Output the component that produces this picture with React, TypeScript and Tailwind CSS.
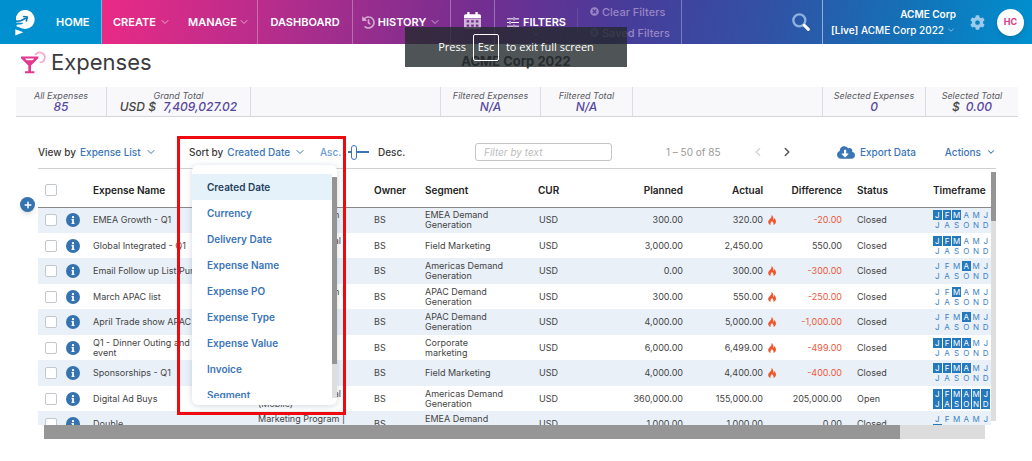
import React from "react";
import { ChevronDown, ChevronLeft, ChevronRight } from "lucide-react";
import { FaCloudDownloadAlt, FaHistory, FaCog, FaInfo, FaPlus, FaTimesCircle } from "react-icons/fa";

type Row = {
  name: string;
  type?: string;
  segment: string;
  planned: string;
  actual: string;
  hot?: boolean;
  diff: string;
  status: string;
  months: number[];
};

const ALL = [0, 1, 2, 3, 4, 5, 6, 7, 8, 9, 10, 11];
const MONTHS = "JFMAMJJASOND".split("");

const rows: Row[] = [
  { name: "EMEA Growth - Q1", type: "Marketing Program | Event", segment: "EMEA Demand Generation", planned: "300.00", actual: "320.00", hot: true, diff: "-20.00", status: "Closed", months: [0, 1, 2] },
  { name: "Global Integrated - Q1", type: "Advertising | Digital (Mobile)", segment: "Field Marketing", planned: "3,000.00", actual: "2,450.00", diff: "550.00", status: "Closed", months: [0, 1, 2] },
  { name: "Email Follow up List Purchase", segment: "Americas Demand Generation", planned: "0.00", actual: "300.00", hot: true, diff: "-300.00", status: "Closed", months: [3] },
  { name: "March APAC list", type: "Marketing Program | Event", segment: "APAC Demand Generation", planned: "300.00", actual: "550.00", hot: true, diff: "-250.00", status: "Closed", months: [2] },
  { name: "April Trade show APAC", segment: "APAC Demand Generation", planned: "4,000.00", actual: "5,000.00", hot: true, diff: "-1,000.00", status: "Closed", months: [3] },
  { name: "Q1 - Dinner Outing and event", segment: "Corporate marketing", planned: "6,000.00", actual: "6,499.00", hot: true, diff: "-499.00", status: "Closed", months: [0, 1, 2, 3] },
  { name: "Sponsorships - Q1", segment: "Field Marketing", planned: "4,000.00", actual: "4,400.00", hot: true, diff: "-400.00", status: "Closed", months: [0, 1, 2, 3] },
  { name: "Digital Ad Buys", type: "Advertising | Digital (Mobile)", segment: "Americas Demand Generation", planned: "360,000.00", actual: "155,000.00", diff: "205,000.00", status: "Open", months: ALL },
  { name: "Double", type: "Marketing Program | Event", segment: "EMEA Demand Generation", planned: "1,000.00", actual: "1,000.00", diff: "0.00", status: "Closed", months: [6] },
];

const sortOptions = ["Created Date", "Currency", "Delivery Date", "Expense Name", "Expense PO", "Expense Type", "Expense Value", "Invoice", "Segment"];

function Logo() {
  return (
    <svg viewBox="0 0 60 80" className="h-[27px] w-5" aria-hidden="true">
      <path d="M3 23 A28.5 28.5 0 1 1 22 58 L4 51 C4 47 8 45 14 46 C20 47 24 44 24 41 L3 40Z" fill="#fff" />
      <path d="M3 36 C12 37 22 34 33 26 M26 22 L37 24 L34 35" fill="none" stroke="#0a78b4" strokeWidth="5" strokeLinecap="round" strokeLinejoin="round" />
      <path d="M1 60 L25 69 L1 79Z" fill="#fff" />
    </svg>
  );
}

function Cocktail() {
  return (
    <svg viewBox="0 0 75 68" className="h-[23px] w-[25px]" aria-hidden="true">
      <path d="M43 12 A15 15 0 1 1 56 34" fill="none" stroke="#f7a8cd" strokeWidth="5" />
      <path d="M0 16 H52 V21 L30 43 V60 H40 V66 H12 V60 H22 V43 L0 21Z M12 22 L17 27 H35 L40 22Z" fill="#e2388f" fillRule="evenodd" />
    </svg>
  );
}

function CalendarIcon() {
  return (
    <svg viewBox="0 0 52 52" className="size-[17px]" aria-hidden="true">
      <path d="M10 0h7v7h18V0h7v7h5a5 5 0 0 1 5 5v7H0v-7a5 5 0 0 1 5-5h5Z" fill="#fff" />
      <path d="M0 21H52V46a5 5 0 0 1-5 5H5a5 5 0 0 1-5-5ZM8 25v7h8v-7ZM22 25v7h8v-7ZM36 25v7h8v-7ZM8 38v7h8v-7ZM22 38v7h8v-7ZM36 38v7h8v-7Z" fill="#fff" fillOpacity="0.65" fillRule="evenodd" />
    </svg>
  );
}

function FilterIcon() {
  return (
    <svg viewBox="0 0 36 32" className="h-[11px] w-3" stroke="#fff" strokeWidth="3" fill="none" aria-hidden="true">
      <path d="M0 5H18M24 5H36M0 16H6M12 16H36M0 27H18M24 27H36M21 0V10M9 11V21M21 22V32" />
    </svg>
  );
}

function SearchIcon() {
  return (
    <svg viewBox="0 0 54 54" className="size-[18px]" fill="none" aria-hidden="true">
      <circle cx="22" cy="22" r="18" stroke="#8fb2dc" strokeWidth="7" />
      <path d="M37 37 L49 49" stroke="#fff" strokeWidth="9" strokeLinecap="round" />
    </svg>
  );
}

function Flame() {
  return (
    <svg viewBox="0 0 24 30" className="h-[10px] w-2" aria-hidden="true">
      <path d="M10 0 C12 6 9 9 5 13 C1 17 0 19 1 23 C2 27 5 29 8 30 C6 25 8 23 12 18 C16 23 18 25 16 30 C20 29 23 26 24 21 C24 16 22 12 19 9 C19 12 18 14 16 15 C17 8 15 3 10 0Z" fill="#f2552c" />
    </svg>
  );
}

function Stat({ label, children, className }: { label: string; children?: React.ReactNode; className: string }) {
  return (
    <div className={`flex flex-col items-center justify-center border-r border-[#dcdce2] text-center italic last:border-r-0 ${className}`}>
      <span className="text-[9px] leading-[10px] text-[#5a5a5f]">{label}</span>
      <span className="text-xs leading-3 font-medium text-[#57489c]">{children}</span>
    </div>
  );
}

function Tick({ label }: { label: string }) {
  return <input type="checkbox" aria-label={label} className="block size-3 appearance-none rounded-[2px] border border-[#c3c8ce] bg-white checked:bg-[#3572b0]" />;
}

function Timeframe({ active }: { active: number[] }) {
  return (
    <div className="grid w-[57px] grid-cols-6 gap-x-px text-[8px] leading-[10px] text-[#3d82c4]">
      {MONTHS.map((m, i) => (
        <span key={i} className={`text-center ${active.includes(i) ? "bg-[#2478bd] text-white" : ""}`}>
          {m}
        </span>
      ))}
    </div>
  );
}

export default function App() {
  return (
    <div className="relative min-h-screen overflow-hidden bg-white font-['Inter','Noto_Sans',sans-serif] text-[#444]">
      <header className="flex h-[44px] bg-[linear-gradient(100deg,#e92a86_10%,#b42d8c_27%,#742e90_46%,#483b99_60%,#3053a6_75%,#1570b6_87%,#0090cf_100%)] text-[11px] font-semibold text-white">
        <a href="#home" className="flex w-[102px] items-center gap-[21px] border-r border-white/40 bg-[#008fcf] pl-[15px]">
          <Logo />
          <span>HOME</span>
        </a>
        <nav className="flex" aria-label="Main">
          <div className="flex w-[156px] items-center border-r border-white/30 pl-[11px]">
            <button className="flex w-[75px] items-center gap-[3px]">
              CREATE <ChevronDown className="size-3 opacity-60" />
            </button>
            <button className="flex items-center gap-px">
              MANAGE <ChevronDown className="size-3 opacity-60" />
            </button>
          </div>
          <a href="#dashboard" className="flex w-[95px] items-center justify-center border-r border-white/30">DASHBOARD</a>
          <button className="flex w-[98px] items-center justify-center gap-[3px] border-r border-white/30">
            <FaHistory className="size-[13px] opacity-60" />
            HISTORY <ChevronDown className="size-3 opacity-60" />
          </button>
          <button aria-label="Calendar" className="flex w-11 items-start justify-center border-r border-white/30 pt-3">
            <CalendarIcon />
          </button>
          <div className="flex w-[187px] items-center border-r border-white/30">
            <button className="relative flex h-7 w-[83px] items-center gap-1 border-r border-white/10 pl-3">
              <FilterIcon /> FILTERS
              <ChevronDown className="absolute top-[21px] left-9 size-[10px] opacity-50" />
            </button>
            <div className="flex flex-1 flex-col gap-[9px] pl-3 text-[11px] leading-3 font-medium text-[#9a85c6]">
              <button className="flex items-center gap-[3px]"><FaTimesCircle className="size-[9px]" /> Clear Filters</button>
              <button className="flex items-center gap-[3px]"><FaTimesCircle className="size-[9px] opacity-60" /> Saved Filters</button>
            </div>
          </div>
        </nav>
        <div className="ml-auto flex items-center">
          <button aria-label="Search" className="mr-3"><SearchIcon /></button>
          <button className="flex h-full flex-col items-end justify-center border-l border-white/50 pl-2 text-[10px] leading-4">
            <span className="font-semibold">ACME Corp</span>
            <span className="flex items-center gap-[2px] font-medium">
              <span><b className="font-semibold">[Live]</b> ACME Corp 2022</span>
              <ChevronDown className="size-[10px] opacity-60" />
            </span>
          </button>
          <button aria-label="Settings" className="mr-3 ml-[14px] text-[#9ccbea]"><FaCog className="size-[15px]" /></button>
          <button className="mr-2 size-[27px] rounded-full bg-white text-[9px] font-bold text-[#d93a86] shadow-md">HC</button>
        </div>
      </header>

      <div className="grid h-[43px] grid-cols-[1fr_auto_1fr] items-center px-[21px]">
        <h1 className="flex items-center gap-[5px] pb-[7px] text-[22px] leading-7 text-[#3b3b3f]">
          <Cocktail /> Expenses
        </h1>
        <h2 className="pb-[7px] text-[13px] font-bold text-[#333]">ACME Corp 2022</h2>
      </div>

      <section aria-label="Totals" className="mr-[14px] ml-4 flex h-[30px] border-b border-[#d4d4da] bg-[#f8f8fb]">
        <Stat label="All Expenses" className="w-[91px]">85</Stat>
        <Stat label="Grand Total" className="w-[144px]"><span className="mr-1 text-[#444]">USD $</span> 7,409,027.02</Stat>
        <Stat label="" className="flex-1" />
        <Stat label="Filtered Expenses" className="w-[100px]">N/A</Stat>
        <Stat label="Filtered Total" className="w-[92px]">N/A</Stat>
        <Stat label="" className="flex-1" />
        <Stat label="Selected Expenses" className="w-[103px]">0</Stat>
        <Stat label="Selected Total" className="w-[92px]"><span className="mr-[6px] text-[#444]">$</span>0.00</Stat>
      </section>

      <main className="relative mr-9 ml-[38px]">
        <div className="flex h-[52px] items-center border-b border-[#cfcfcf] pt-5 pb-[1px] text-[10px] font-medium text-[#3a3a3a]">
          <div className="flex w-[151px] items-center gap-1">
            View by
            <button className="flex items-center gap-1 text-[#3a75b8]">Expense List <ChevronDown className="size-3" /></button>
          </div>
          <div className="flex w-[131px] items-center gap-1">
            Sort by
            <button aria-haspopup="listbox" aria-expanded="true" className="flex items-center gap-1 text-[#3a75b8]">Created Date <ChevronDown className="size-3" /></button>
          </div>
          <label htmlFor="direction" className="w-7 text-[#6b9bcf]">Asc.</label>
          <input
            id="direction"
            type="range"
            min={0}
            max={1}
            defaultValue={0}
            className="h-[15px] w-[21px] appearance-none bg-[linear-gradient(#3a75b8,#3a75b8)] bg-[length:100%_2px] bg-center bg-no-repeat [&::-webkit-slider-thumb]:ml-[3px] [&::-webkit-slider-thumb]:h-[15px] [&::-webkit-slider-thumb]:w-[6px] [&::-webkit-slider-thumb]:appearance-none [&::-webkit-slider-thumb]:rounded-[3px] [&::-webkit-slider-thumb]:border [&::-webkit-slider-thumb]:border-[#3a75b8] [&::-webkit-slider-thumb]:bg-white"
          />
          <span className="ml-[9px] w-[97px]">Desc.</span>
          <input type="text" aria-label="Filter by text" placeholder="Filter by text" className="h-[18px] w-[137px] rounded-[3px] border border-[#c4c4c4] px-2 font-normal italic placeholder:text-[#bcbcbc]" />
          <div className="ml-auto flex items-center">
            <span className="w-[85px] font-normal text-[#999]">1 – 50 of 85</span>
            <button aria-label="Previous page" className="mr-[15px] text-[#d0d0d0]"><ChevronLeft className="size-[14px]" /></button>
            <button aria-label="Next page" className="text-[#555]"><ChevronRight className="size-[14px]" strokeWidth={2.5} /></button>
            <button className="ml-[43px] flex items-center gap-[5px] text-[10px] text-[#3a75b8]">
              <FaCloudDownloadAlt className="h-[15px] w-[18px]" /> Export Data
            </button>
            <button className="ml-[29px] flex items-center gap-[5px] text-[10px] text-[#3a75b8]">
              Actions <ChevronDown className="size-[10px]" strokeWidth={2.5} />
            </button>
          </div>
        </div>

        <div className="flex h-[256px]">
          <div className="min-w-0 flex-1 overflow-hidden">
            <table className="w-full table-fixed border-collapse text-[9px] leading-[10px]">
              <colgroup>
                <col className="w-[24px]" />
                <col className="w-[23px]" />
                <col />
                <col className="w-[116px]" />
                <col className="w-[51px]" />
                <col className="w-[113px]" />
                <col className="w-[70px]" />
                <col className="w-[83px]" />
                <col className="w-[97px]" />
                <col className="w-[62px]" />
                <col className="w-[83px]" />
                <col className="w-[66px]" />
              </colgroup>
              <thead>
                <tr className="h-[38px] border-b border-[#888] text-left text-[10px] text-[#222] [&>th]:pt-1 [&>th]:font-semibold">
                  <th className="pl-[7px]"><Tick label="Select all" /></th>
                  <th />
                  <th className="pl-2">Expense Name</th>
                  <th className="pl-2">Type</th>
                  <th className="pl-2">Owner</th>
                  <th className="pl-2">Segment</th>
                  <th className="pl-2">CUR</th>
                  <th className="text-right">Planned</th>
                  <th className="pr-[17px] text-right">Actual</th>
                  <th className="text-right">Difference</th>
                  <th className="pl-[15px]">Status</th>
                  <th className="pl-2">Timeframe</th>
                </tr>
              </thead>
              <tbody>
                {rows.map((r) => (
                  <tr key={r.name} className="h-[25px] odd:h-[26px] odd:bg-[#e9f0f8]">
                    <td className="pl-[7px]"><Tick label={`Select ${r.name}`} /></td>
                    <td>
                      <button aria-label={`Details of ${r.name}`} className="ml-1 flex size-[14px] items-center justify-center rounded-full bg-[#3572b0] text-white">
                        <FaInfo className="size-2" />
                      </button>
                    </td>
                    <td className="pl-2"><div className="max-w-[110px] overflow-visible">{r.name.startsWith("Q1") ? r.name : <span className="whitespace-nowrap">{r.name}</span>}</div></td>
                    <td className="pr-4 pl-2">{r.type}</td>
                    <td className="pl-2">BS</td>
                    <td className="pr-5 pl-2">{r.segment}</td>
                    <td className="pl-[9px]">USD</td>
                    <td className="text-right">{r.planned}</td>
                    <td>
                      <div className="flex items-center justify-end">
                        {r.actual}
                        <span className="flex w-[17px] justify-center">{r.hot && <Flame />}</span>
                      </div>
                    </td>
                    <td className={`text-right ${r.diff.startsWith("-") ? "text-[#ee5a3c]" : ""}`}>{r.diff}</td>
                    <td className="pl-[15px]">{r.status}</td>
                    <td className="pl-2"><Timeframe active={r.months} /></td>
                  </tr>
                ))}
              </tbody>
            </table>
          </div>
          <div className="mt-[3px] mb-1 w-[5px] bg-[#dedede]">
            <div className="h-[49px] bg-[#949494]" />
          </div>
        </div>
        <div className="mr-[11px] ml-[6px] h-[14px] bg-[#dcdcdc]">
          <div className="h-full w-[91%] bg-[#969696]" />
        </div>

        <button aria-label="Add expense" className="absolute top-20 -left-[18px] flex size-[15px] items-center justify-center rounded-full bg-[#3572b0] text-white shadow-md">
          <FaPlus className="size-2" />
        </button>

        <div className="absolute top-12 left-[154px] w-[145px] rounded-md bg-white pt-[9px] pb-[7px] shadow-[0_1px_6px_rgba(70,100,140,0.25)]">
          <div className="flex h-[224px] overflow-hidden">
            <ul role="listbox" aria-label="Sort by" className="flex-1 text-[10px] font-semibold text-[#3a75b8]">
              {sortOptions.map((o, i) => (
                <li key={o} role="option" aria-selected={i === 0} className={`flex h-[26px] items-center pl-[15px] ${i === 0 ? "bg-[#e5f2f9] text-[#24405f]" : ""}`}>
                  {o}
                </li>
              ))}
            </ul>
            <div className="mt-[3px] w-[5px] bg-[#dedede]">
              <div className="h-[187px] bg-[#949494]" />
            </div>
          </div>
        </div>
        <div className="pointer-events-none absolute top-[19px] left-[139px] h-[279px] w-[169px] border-[3px] border-[#ee0a0f]" />
      </main>

      <div role="status" className="absolute top-[27px] left-1/2 flex h-10 w-[222px] -translate-x-1/2 items-center justify-center gap-[7px] bg-[#23292d]/80 font-['Open_Sans','Noto_Sans',sans-serif] text-[11px] text-white">
        Press
        <kbd className="flex h-[27px] w-[26px] items-center justify-center rounded-[2px] border border-white font-['Open_Sans','Noto_Sans',sans-serif] text-[11px]">Esc</kbd>
        to exit full screen
      </div>
    </div>
  );
}
